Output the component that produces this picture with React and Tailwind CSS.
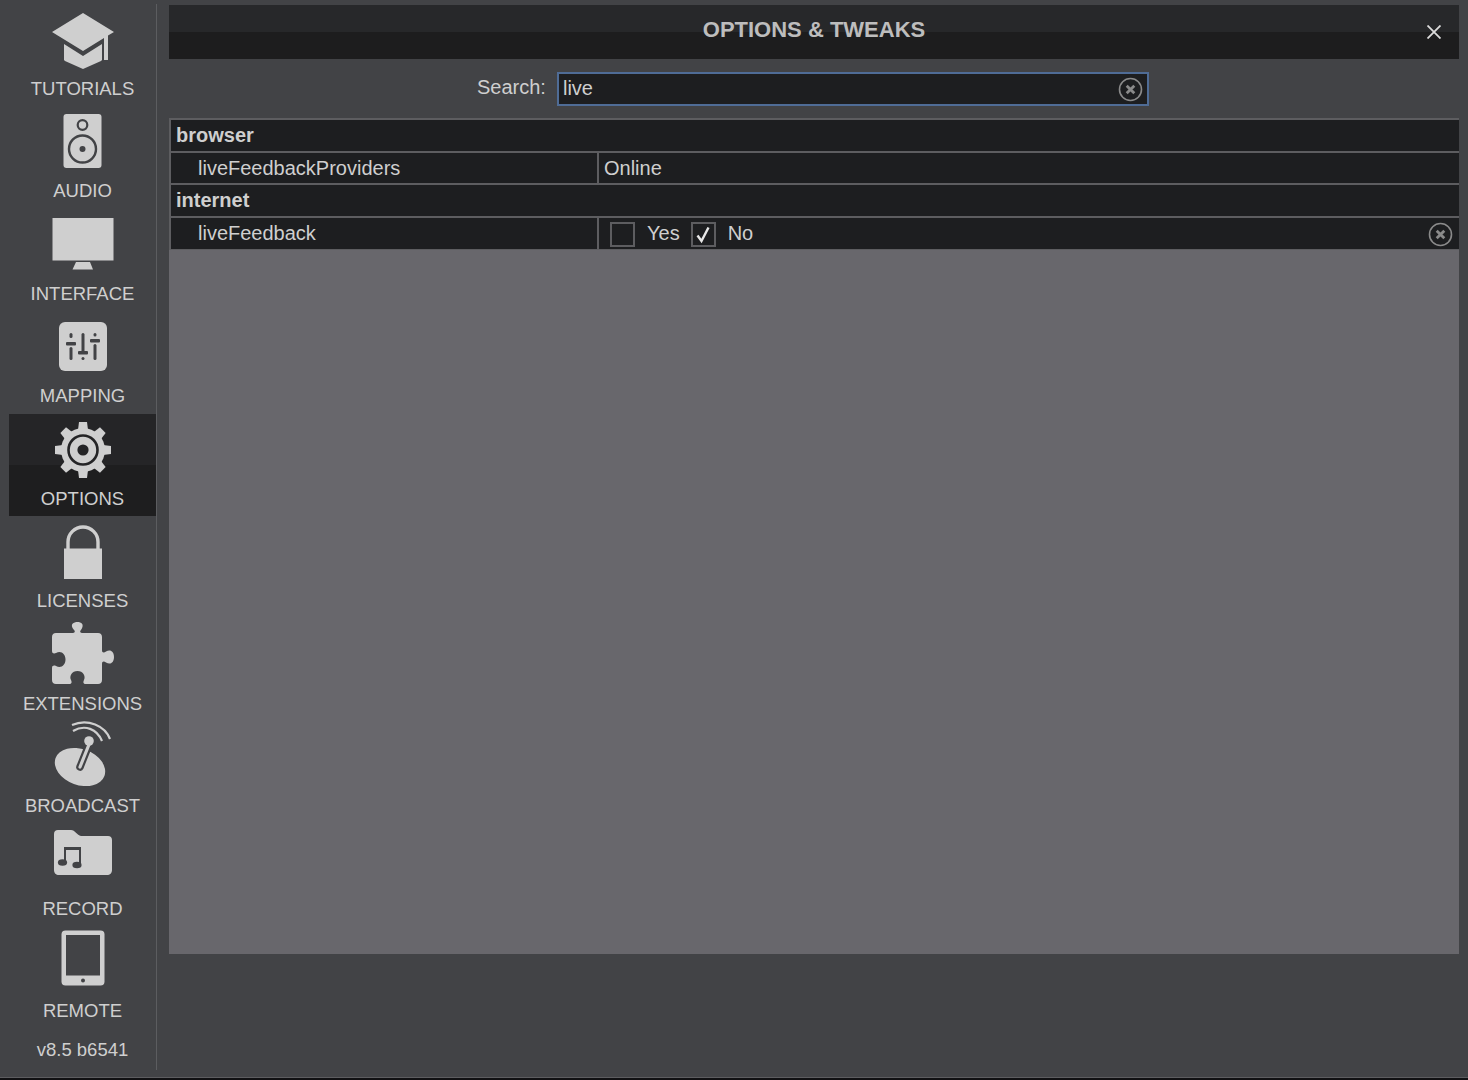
const Label = ({ children }) => (
  <div className="text-[18.5px] leading-[22px] text-[#cfcfcf] text-center whitespace-nowrap">{children}</div>
);

const Cap = () => (
  <svg width="64" height="58" viewBox="0 0 64 58" fill="#cfcfcf">
    <path d="M32 0 L63 19 L57 22.5 L57 47 L53 47 L53 25 L32 38 L1 19 Z" />
    <path d="M13 31 L32 43 L51 31 L51 47 L50 48 L32 56 L14 48 L13 47 Z" />
  </svg>
);
const Speaker = () => (
  <svg width="40" height="54" viewBox="0 0 40 54">
    <rect x="0.5" y="0" width="38" height="54" rx="3" fill="#cfcfcf" />
    <circle cx="19.5" cy="11" r="4.8" fill="none" stroke="#424346" strokeWidth="2.2" />
    <circle cx="19.5" cy="35" r="13.5" fill="none" stroke="#424346" strokeWidth="2.4" />
    <circle cx="19.5" cy="35" r="3" fill="#424346" />
  </svg>
);
const Monitor = () => (
  <svg width="62" height="52" viewBox="0 0 62 52" fill="#cfcfcf">
    <rect x="0.5" y="0" width="61" height="42.5" />
    <path d="M24 44 H38 L41 51.5 H20.5 Z" />
  </svg>
);
const Sliders = () => (
  <svg width="48" height="49" viewBox="0 0 48 49">
    <rect x="0" y="0" width="48" height="49" rx="6" fill="#cfcfcf" />
    <g fill="#424346">
      <rect x="10.5" y="11" width="3" height="5" rx="1.5" />
      <rect x="7" y="20" width="10" height="3.4" rx="1" />
      <rect x="10.5" y="25" width="3" height="13" rx="1.5" />
      <rect x="22.5" y="11" width="3" height="19" rx="1.5" />
      <rect x="19" y="29" width="10" height="3.4" rx="1" />
      <rect x="22.5" y="35" width="3" height="3" rx="1.5" />
      <rect x="34.5" y="11" width="3" height="3.4" rx="1.5" />
      <rect x="31" y="17" width="10" height="3.4" rx="1" />
      <rect x="34.5" y="22" width="3" height="16" rx="1.5" />
    </g>
  </svg>
);
const Gear = () => (
  <svg width="58" height="58" viewBox="-29 -29 58 58">
    <g fill="#cfcfcf">
      {[0, 45, 90, 135, 180, 225, 270, 315].map((a) => (
        <path key={a} transform={`rotate(${a})`} d="M-5 -20 L-4 -28 H4 L5 -20 Z" />
      ))}
      <circle r="22" />
    </g>
    <circle r="14.5" fill="none" stroke="#242426" strokeWidth="2.6" />
    <circle r="5.6" fill="#242426" />
  </svg>
);
const Lock = () => (
  <svg width="40" height="54" viewBox="0 0 40 54" fill="#cfcfcf">
    <path d="M5 24 V17 A15 15 0 0 1 35 17 V24" fill="none" stroke="#cfcfcf" strokeWidth="3.4" />
    <rect x="1" y="23.5" width="38" height="30.5" />
  </svg>
);
const Puzzle = () => (
  <svg width="62" height="62" viewBox="0 0 62 62" fill="#cfcfcf">
    <path d="M4 11 H20 C23 11 23.5 9.5 22 8 C17 2 22 0 25.5 0 C29 0 33 2 29 8 C27.5 9.5 28 11 31 11 H46 C48.5 11 50 12.5 50 15 V28 C50 31 52 31 54 29.5 C58 27 62 29 62 35 C62 41 58 43 54 40.5 C52 39 50 39 50 42 V58 C50 60.5 48.5 62 46 62 H34 C31 62 31 60 32 58 C34 54 31 49 25.5 49 C20 49 17 54 19 58 C20 60 20 62 17 62 H4 C1.5 62 0 60.5 0 58 V46 C0 43.5 2 43 4 44 C9 47 13.5 43 13.5 37.5 C13.5 32 9 28 4 31 C2 32 0 31.5 0 29 V15 C0 12.5 1.5 11 4 11 Z" />
  </svg>
);
const Dish = () => (
  <svg width="60" height="66" viewBox="0 0 60 66" fill="none">
    <ellipse cx="27" cy="46" rx="26" ry="18" transform="rotate(20 27 46)" fill="#cfcfcf" />
    <path d="M37 21 L27 46" stroke="#424346" strokeWidth="7.5" strokeLinecap="round" />
    <path d="M37 21 L27 46" stroke="#cfcfcf" strokeWidth="3.2" strokeLinecap="round" />
    <circle cx="36" cy="20" r="4.8" fill="#cfcfcf" />
    <path d="M20 10 C32 3 44 8 49 20" stroke="#cfcfcf" strokeWidth="2.2" />
    <path d="M19 4 C35 -3 52 5 57 18" stroke="#cfcfcf" strokeWidth="2.2" />
  </svg>
);
const Folder = () => (
  <svg width="58" height="46" viewBox="0 0 58 46">
    <path d="M4 0 H17 C21 0 23 5 27 6 H54 C56.5 6 58 7.5 58 10 V40 C58 43 56 45 53 45 H5 C2 45 0 43 0 40 V4 C0 1.5 1.5 0 4 0 Z" fill="#cfcfcf" />
    <g fill="#424346">
      <path d="M10 17 H27 V33 H25 V20 H12 V32 H10 Z" />
      <ellipse cx="8.5" cy="32.5" rx="4.6" ry="3.2" />
      <ellipse cx="23" cy="35" rx="4.6" ry="3.2" />
    </g>
  </svg>
);
const Tablet = () => (
  <svg width="44" height="56" viewBox="0 0 44 56">
    <rect x="0.5" y="0.5" width="43" height="55" rx="4" fill="#cfcfcf" />
    <rect x="5" y="5" width="34" height="40.5" fill="#424346" />
    <circle cx="22" cy="50.5" r="2" fill="#424346" />
  </svg>
);

const ClearIcon = ({ color = "#8a8a8a" }) => (
  <svg width="25" height="25" viewBox="0 0 25 25" fill="none" stroke={color}>
    <circle cx="12.5" cy="12.5" r="11" strokeWidth="1.6" />
    <path d="M8.7 8.7 L16.3 16.3 M16.3 8.7 L8.7 16.3" strokeWidth="2.8" />
  </svg>
);

const navItems = [
  { label: "TUTORIALS", icon: <Cap />, pt: "pt-[9px]", h: "h-[65px]" },
  { label: "AUDIO", icon: <Speaker />, pt: "pt-[8px]", h: "h-[65px]" },
  { label: "INTERFACE", icon: <Monitor />, pt: "pt-[9px]", h: "h-[65px]" },
  { label: "MAPPING", icon: <Sliders />, pt: "pt-[11px]", h: "h-[65px]" },
  { label: "OPTIONS", icon: <Gear />, pt: "pt-[7px]", h: "h-[65px]", active: true },
  { label: "LICENSES", icon: <Lock />, pt: "pt-[9px]", h: "h-[65px]" },
  { label: "EXTENSIONS", icon: <Puzzle />, pt: "pt-[3px]", h: "h-[65px]" },
  { label: "BROADCAST", icon: <Dish />, pt: "pt-0", h: "h-[65px]" },
  { label: "RECORD", icon: <Folder />, pt: "pt-[6px]", h: "h-[65px]" },
  { label: "REMOTE", icon: <Tablet />, pt: "pt-[4px]", h: "h-[65px]" },
];

const NavItem = ({ item }) => (
  <div
    className={
      "relative h-[102.44px] shrink-0 ml-[9px] w-[147px] flex flex-col items-center " +
      (item.active ? "bg-[linear-gradient(#252527_0,#252527_50%,#1e1e1f_50%,#1e1e1f_100%)]" : "")
    }
  >
    <div className={"h-[74px] shrink-0 flex justify-center items-start " + item.pt}>{item.icon}</div>
    <Label>{item.label}</Label>
  </div>
);

const cellText = "text-[20px] leading-[32px] text-[#cfcfcf] whitespace-nowrap";

const Section = ({ children }) => (
  <div className="h-[32.5px] flex items-center pl-[5px] bg-[#1d1e20] border-b-2 border-[#5d5d60]">
    <span className="text-[20px] font-bold text-[#cfcfcf]">{children}</span>
  </div>
);

const Row = ({ name, children, last }) => (
  <div className={"h-[32.5px] flex bg-[#1d1e20] " + (last ? "border-b border-[#5d5d60]" : "border-b-2 border-[#5d5d60]")}>
    <div className={"w-[428px] shrink-0 pl-[27px] border-r-2 border-[#5d5d60] flex items-center " + cellText}>{name}</div>
    <div className={"flex-1 flex items-center relative " + cellText}>{children}</div>
  </div>
);

const Check = ({ checked }) => (
  <div className="w-[25px] h-[25px] shrink-0 mt-[2px] border-2 border-[#5d5d60] flex items-center justify-center">
    {checked && (
      <svg width="19" height="19" viewBox="0 0 19 19" fill="none">
        <path d="M3.5 10.5 L7.5 16 L14.5 2.5" stroke="#e8e8e8" strokeWidth="2.4" />
      </svg>
    )}
  </div>
);

export default function App() {
  return (
    <div
      className="w-[1468px] h-[1080px] overflow-hidden bg-[#424346] flex flex-col"
      style={{ fontFamily: '"Liberation Sans", Arial, sans-serif' }}
    >
      <div className="flex-1 min-h-0 flex">
        <aside className="w-[157px] shrink-0 h-[1066px] mt-[4px] border-r border-[#5c5d60] flex flex-col">
          {navItems.map((item) => (
            <NavItem key={item.label} item={item} />
          ))}
          <div className="text-[18.5px] leading-[22px] text-[#cfcfcf] text-center ml-[9px] w-[147px] mt-[11px]">v8.5 b6541</div>
        </aside>
        <main className="w-[1290px] ml-[12px] mt-[5px] h-[949px] flex flex-col bg-[#424346]">
          <header className="relative h-[54px] shrink-0 bg-[linear-gradient(#27282a_0,#27282a_50%,#1d1d1e_50%,#1d1d1e_100%)] flex items-center justify-center">
            <h1 className="text-[22px] font-bold text-[#bdbdbd] -mt-[5px]">OPTIONS &amp; TWEAKS</h1>
            <svg className="absolute left-[1258px] top-[20px]" width="14" height="14" viewBox="0 0 14 14" fill="none">
              <path d="M0.5 0.5 L13.5 13.5 M13.5 0.5 L0.5 13.5" stroke="#dcdcdc" strokeWidth="1.8" />
            </svg>
          </header>
          <div className="h-[59px] shrink-0 flex items-start pt-[13px] pl-[308px]">
            <span className="text-[20px] leading-[30px] text-[#cfcfcf] mr-[11px]">Search:</span>
            <div className="w-[592px] h-[34px] bg-[#1d1e20] border-2 border-[#4f6c96] flex items-center pl-[4px] pr-[4px] justify-between">
              <span className="text-[20px] text-[#cfcfcf] -mt-[2px]">live</span>
              <ClearIcon />
            </div>
          </div>
          <div className="flex-1 min-h-0 bg-[#68676c]">
            <div className="border-t-2 border-l-2 border-[#5d5d60]">
              <Section>browser</Section>
              <Row name="liveFeedbackProviders">
                <span className="pl-[5px]">Online</span>
              </Row>
              <Section>internet</Section>
              <Row name="liveFeedback" last>
                <div className="pl-[11px] flex items-center">
                  <Check />
                  <span className="ml-[12px]">Yes</span>
                  <div className="ml-[11px]"><Check checked /></div>
                  <span className="ml-[12px]">No</span>
                </div>
                <div className="absolute right-[6px] top-[4px]"><ClearIcon /></div>
              </Row>
            </div>
          </div>
        </main>
      </div>
      <div className="h-[3px] shrink-0 bg-[#111113] border-t border-[#5d5d60]"></div>
    </div>
  );
}
